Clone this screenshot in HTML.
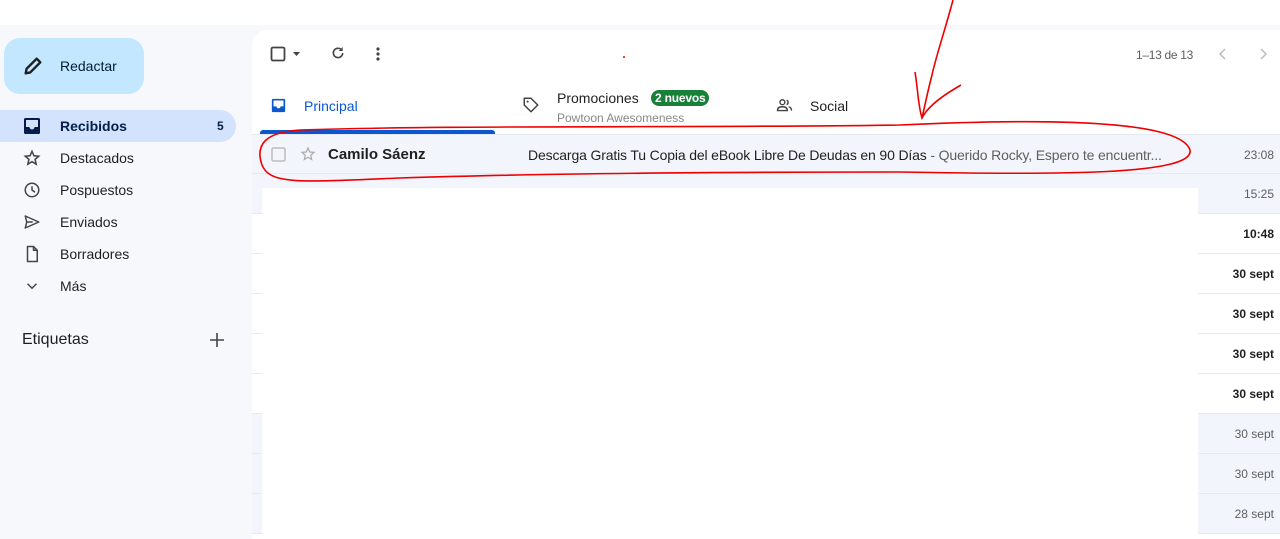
<!DOCTYPE html>
<html><head><meta charset="utf-8"><style>
*{margin:0;padding:0;box-sizing:border-box}
html,body{width:1280px;height:539px;overflow:hidden}
body{background:#f6f8fc;font-family:"Liberation Sans",Arial,sans-serif;color:#1f1f1f;position:relative}
.abs{position:absolute}
.top{left:0;top:0;width:1280px;height:25px;background:#fff}
.compose{left:4px;top:38px;width:140px;height:56px;background:#c2e7ff;border-radius:16px}
.compose span{position:absolute;left:56px;top:20px;font-size:14px;color:#001d35}
.nav{left:0;width:236px;height:32px;font-size:14px;color:#1f1f1f}
.nav .t{position:absolute;left:60px;top:8px}
.nav svg{position:absolute;left:23px;top:7px}
.sel{background:#d3e3fd;border-radius:0 16px 16px 0;font-weight:bold;color:#041e49}
.main{left:252px;top:30px;width:1040px;height:509px;background:#fff;border-radius:16px 0 0 0}
.row{left:252px;width:1028px;height:40px;border-bottom:1px solid #e6e9ef}
.read{background:#f2f6fc}
.time{right:6px;top:13px;font-size:12px;color:#5e5e5e;text-align:right}
.unread .time{font-weight:bold;color:#1f1f1f}
</style></head><body>
<div class="abs top"></div>
<div class="abs compose"><svg class="abs" style="left:18px;top:17px" width="22" height="22" viewBox="0 0 24 24"><path d="M4 20l1-5L16 4l4 4L9 19z" fill="none" stroke="#1f1f1f" stroke-width="2.6" stroke-linejoin="round"/></svg><span>Redactar</span></div>

<div class="abs nav sel" style="top:110px"><svg width="18" height="18" viewBox="0 0 18 18"><rect x="1" y="1" width="16" height="16" rx="1.5" fill="#041e49"/><path d="M3 3h12v7h-3.5a2.5 2.5 0 0 1-5 0H3z" fill="#d3e3fd"/></svg><span class="t">Recibidos</span><span class="abs" style="left:217px;top:9px;font-size:12px">5</span></div>
<div class="abs nav" style="top:142px"><svg width="18" height="18" viewBox="0 0 24 24"><path d="M12 3l2.6 6 6.4.6-4.9 4.3 1.5 6.3L12 16.9 6.4 20.2l1.5-6.3L3 9.6 9.4 9z" fill="none" stroke="#444" stroke-width="2"/></svg><span class="t">Destacados</span></div>
<div class="abs nav" style="top:174px"><svg width="18" height="18" viewBox="0 0 24 24"><circle cx="12" cy="12" r="9" fill="none" stroke="#444" stroke-width="2"/><path d="M12 7v5l4 3" fill="none" stroke="#444" stroke-width="2"/></svg><span class="t">Pospuestos</span></div>
<div class="abs nav" style="top:206px"><svg width="18" height="18" viewBox="0 0 24 24"><path d="M3 4l18 8-18 8 2-8z M5 12h8" fill="none" stroke="#444" stroke-width="2" stroke-linejoin="round"/></svg><span class="t">Enviados</span></div>
<div class="abs nav" style="top:238px"><svg width="18" height="18" viewBox="0 0 24 24"><path d="M6 2h8l5 5v15H6z M14 2v5h5" fill="none" stroke="#444" stroke-width="2" stroke-linejoin="round"/></svg><span class="t">Borradores</span></div>
<div class="abs nav" style="top:270px"><svg width="18" height="18" viewBox="0 0 24 24"><path d="M6 9l6 6 6-6" fill="none" stroke="#444" stroke-width="2"/></svg><span class="t">Más</span></div>
<div class="abs" style="left:22px;top:331px;font-size:16px;color:#1f1f1f">Etiquetas</div>
<svg class="abs" style="left:210px;top:333px" width="14" height="14"><path d="M7 0v14M0 7h14" stroke="#444" stroke-width="1.6"/></svg>

<div class="abs main"></div>
<svg class="abs" style="left:270px;top:46px" width="34" height="16" viewBox="0 0 34 16"><rect x="1.5" y="1.5" width="13" height="13" rx="1.5" fill="none" stroke="#444" stroke-width="1.8"/><path d="M23 6h7l-3.5 4z" fill="#444"/></svg>
<svg class="abs" style="left:330px;top:45px" width="16" height="16" viewBox="0 0 24 24"><path d="M19 12a7 7 0 1 1-2-5" fill="none" stroke="#444" stroke-width="2.4"/><path d="M19 3v6h-6z" fill="#444"/></svg>
<svg class="abs" style="left:374px;top:46px" width="8" height="16"><circle cx="4" cy="3" r="1.6" fill="#444"/><circle cx="4" cy="8" r="1.6" fill="#444"/><circle cx="4" cy="13" r="1.6" fill="#444"/></svg>
<div class="abs" style="left:1136px;top:48px;font-size:12px;color:#5e5e5e;letter-spacing:-0.3px">1–13 de 13</div>
<svg class="abs" style="left:1219px;top:48px" width="8" height="12"><path d="M6 1L1 6l5 5" fill="none" stroke="#bbb" stroke-width="1.5"/></svg>
<svg class="abs" style="left:1259px;top:48px" width="8" height="12"><path d="M2 1l5 5-5 5" fill="none" stroke="#bbb" stroke-width="1.5"/></svg>
<svg class="abs" style="left:271px;top:98px" width="15" height="15" viewBox="0 0 18 18"><rect x="1" y="1" width="16" height="16" rx="1.5" fill="#0b57d0"/><path d="M3 3h12v7h-3.5a2.5 2.5 0 0 1-5 0H3z" fill="#fff"/></svg>
<div class="abs" style="left:304px;top:98px;font-size:14px;color:#0b57d0">Principal</div>
<div class="abs" style="left:260px;top:130px;width:235px;height:4px;background:#0b57d0;border-radius:3px 3px 0 0"></div>
<svg class="abs" style="left:522px;top:96px" width="18" height="18" viewBox="0 0 24 24"><path d="M3 3h9l9 9-9 9-9-9z" fill="none" stroke="#444" stroke-width="2" stroke-linejoin="round"/><circle cx="7.5" cy="7.5" r="1.4" fill="#444"/></svg>
<div class="abs" style="left:557px;top:90px;font-size:14px;color:#1f1f1f">Promociones</div>
<div class="abs" style="left:651px;top:90px;height:16px;padding:0 4px;background:#188038;color:#fff;font-size:12px;font-weight:bold;border-radius:8px;line-height:16px;letter-spacing:-0.2px">2 nuevos</div>
<div class="abs" style="left:557px;top:111px;font-size:12px;color:#888">Powtoon Awesomeness</div>
<svg class="abs" style="left:776px;top:98px" width="17" height="14" viewBox="0 0 24 20"><circle cx="9" cy="6" r="3.5" fill="none" stroke="#444" stroke-width="2"/><path d="M2 18c0-4 3-5.5 7-5.5s7 1.5 7 5.5z" fill="none" stroke="#444" stroke-width="2"/><path d="M15 3a3.5 3.5 0 0 1 0 6.5 M18 12.5c2 .5 4 2 4 5.5" fill="none" stroke="#444" stroke-width="2"/></svg>
<div class="abs" style="left:810px;top:98px;font-size:14px;color:#1f1f1f">Social</div>

<div class="abs row read" style="top:134px;border-top:1px solid #e6e9ef"><div class="abs time">23:08</div></div>
<div class="abs row read" style="top:174px"><div class="abs time">15:25</div></div>
<div class="abs row unread" style="top:214px"><div class="abs time">10:48</div></div>
<div class="abs row unread" style="top:254px"><div class="abs time">30 sept</div></div>
<div class="abs row unread" style="top:294px"><div class="abs time">30 sept</div></div>
<div class="abs row unread" style="top:334px"><div class="abs time">30 sept</div></div>
<div class="abs row unread" style="top:374px"><div class="abs time">30 sept</div></div>
<div class="abs row read" style="top:414px"><div class="abs time">30 sept</div></div>
<div class="abs row read" style="top:454px"><div class="abs time">30 sept</div></div>
<div class="abs row read" style="top:494px"><div class="abs time">28 sept</div></div>
<div class="abs" style="left:262px;top:188px;width:936px;height:351px;background:#fff"></div>

<svg class="abs" style="left:271px;top:147px" width="15" height="15"><rect x="1" y="1" width="13" height="13" rx="1.5" fill="none" stroke="#bbb" stroke-width="1.5"/></svg>
<svg class="abs" style="left:300px;top:146px" width="16" height="16" viewBox="0 0 24 24"><path d="M12 3l2.6 6 6.4.6-4.9 4.3 1.5 6.3L12 16.9 6.4 20.2l1.5-6.3L3 9.6 9.4 9z" fill="none" stroke="#aaa" stroke-width="1.8"/></svg>
<div class="abs" style="left:328px;top:146px;font-size:15px;font-weight:bold;color:#1f1f1f">Camilo Sáenz</div>
<div class="abs" style="left:528px;top:147px;font-size:14px;color:#1f1f1f;white-space:nowrap;letter-spacing:-0.15px">Descarga Gratis Tu Copia del eBook Libre De Deudas en 90 Días <span style="color:#5e5e5e">- Querido Rocky, Espero te encuentr...</span></div>

<svg class="abs" style="left:0;top:0" width="1280" height="539">
<path d="M300 130 C 450 125, 700 128, 900 125 C 1050 118, 1180 120, 1190 150 C 1195 175, 1060 175, 900 172 C 700 172, 520 174, 400 178 C 300 182, 270 185, 262 165 C 255 145, 265 132, 300 130" fill="none" stroke="#e00" stroke-width="1.6"/>
<path d="M953 0 C 945 30, 935 60, 932 75 C 928 90, 925 105, 922 118 M915 72 C 918 90, 918 105, 922 118 C 926 110, 935 100, 961 85" fill="none" stroke="#e00" stroke-width="1.6"/>
<circle cx="624" cy="57" r="1" fill="#e00"/>
</svg>
</body></html>
